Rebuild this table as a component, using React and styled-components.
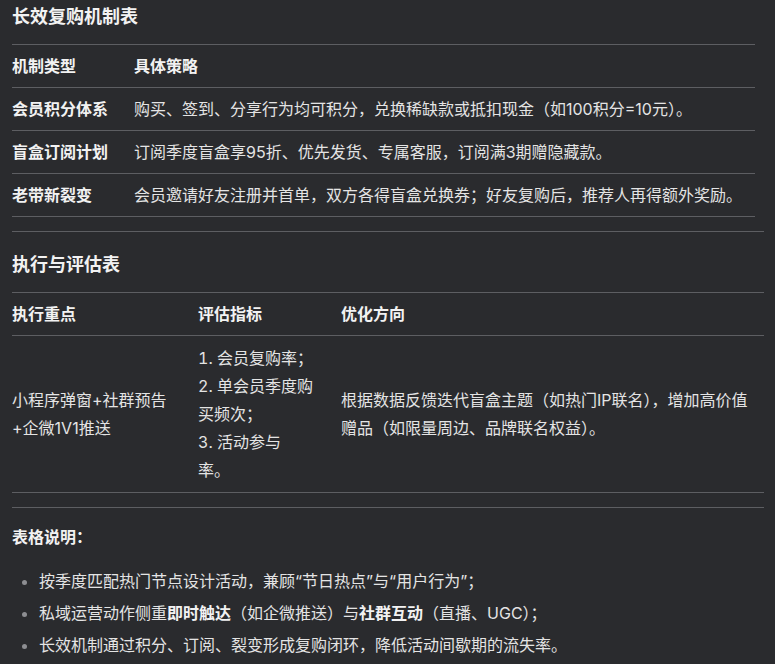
import React from "react";
import styled, { createGlobalStyle } from "styled-components";

const GlobalStyle = createGlobalStyle`
  body {
    margin: 0;
    background: #2a2b2e;
    color: #e4e4e4;
    font-family: "Inter", "Noto Sans CJK SC", sans-serif;
    font-size: 16px;
  }
`;

const Page = styled.div`
  padding: 3px 11px 20px 12px;
`;

const SectionTitle = styled.h3`
  margin: ${(p) => (p.$first ? "0" : "19px")} 0 13px;
  font-size: 18px;
  line-height: 28px;
  font-weight: 700;
  color: #f2f2f2;
`;

const Table = styled.table`
  border-collapse: collapse;
  width: ${(p) => (p.$full ? "100%" : "auto")};
  border-top: 1px solid #5d5e62;
`;

const Th = styled.th`
  box-sizing: border-box;
  width: ${(p) => p.$w || "auto"};
  padding: 8px 13px;
  text-align: left;
  font-weight: 700;
  line-height: 26px;
  color: #f2f2f2;
  border-bottom: 1px solid #5d5e62;
  white-space: nowrap;

  &:first-child {
    padding-left: 0;
  }
`;

const Td = styled.td`
  padding: 8px 13px;
  line-height: ${(p) => (p.$tall ? "28px" : "26px")};
  vertical-align: middle;
  border-bottom: 1px solid #5d5e62;
  font-weight: ${(p) => (p.$bold ? 700 : 400)};
  color: ${(p) => (p.$bold ? "#f2f2f2" : "#e4e4e4")};
  white-space: ${(p) => (p.$nowrap ? "nowrap" : "normal")};

  &:first-child {
    padding-left: 0;
  }
`;

const MetricList = styled.ol`
  margin: 0;
  padding: 0;
  list-style-position: inside;
  line-height: 28px;
`;

const Divider = styled.hr`
  margin: 14px 0 0;
  border: 0;
  border-top: 1px solid #5d5e62;
`;

const NoteTitle = styled.p`
  margin: 15px 0 16px;
  line-height: 28px;
  font-weight: 700;
  color: #f2f2f2;
`;

const BulletList = styled.ul`
  margin: 0;
  padding-left: 27px;
`;

const Bullet = styled.li`
  line-height: 28px;
  margin-bottom: 4px;

  &::marker {
    color: #8d8e92;
  }

  strong {
    font-weight: 700;
    color: #f2f2f2;
  }
`;

const mechanisms = [
  ["会员积分体系", "购买、签到、分享行为均可积分，兑换稀缺款或抵扣现金（如100积分=10元）。"],
  ["盲盒订阅计划", "订阅季度盲盒享95折、优先发货、专属客服，订阅满3期赠隐藏款。"],
  ["老带新裂变", "会员邀请好友注册并首单，双方各得盲盒兑换券；好友复购后，推荐人再得额外奖励。"],
];

// the last metric breaks before 率 as in the design
const metrics = [["会员复购率；"], ["单会员季度购买频次；"], ["活动参与", "率。"]];

export default function App() {
  return (
    <Page>
      <GlobalStyle />
      <SectionTitle $first>长效复购机制表</SectionTitle>
      <Table>
        <thead>
          <tr>
            <Th>机制类型</Th>
            <Th>具体策略</Th>
          </tr>
        </thead>
        <tbody>
          {mechanisms.map(([type, plan]) => (
            <tr key={type}>
              <Td $bold $nowrap>{type}</Td>
              <Td $nowrap>{plan}</Td>
            </tr>
          ))}
        </tbody>
      </Table>
      <Divider />

      <SectionTitle>执行与评估表</SectionTitle>
      <Table $full>
        <thead>
          <tr>
            <Th $w="173px">执行重点</Th>
            <Th $w="143px">评估指标</Th>
            <Th>优化方向</Th>
          </tr>
        </thead>
        <tbody>
          <tr>
            <Td $tall>小程序弹窗+社群预告+企微1V1推送</Td>
            <Td $tall>
              <MetricList>
                {metrics.map(([head, tail]) => (
                  <li key={head}>
                    {head}
                    {tail && (
                      <>
                        <br />
                        {tail}
                      </>
                    )}
                  </li>
                ))}
              </MetricList>
            </Td>
            <Td $tall>
              根据数据反馈迭代盲盒主题（如热门IP联名），增加高价值赠品（如限量周边、品牌联名权益）。
            </Td>
          </tr>
        </tbody>
      </Table>
      <Divider />

      <NoteTitle>表格说明：</NoteTitle>
      <BulletList>
        <Bullet>按季度匹配热门节点设计活动，兼顾“节日热点”与“用户行为”；</Bullet>
        <Bullet>
          私域运营动作侧重<strong>即时触达</strong>（如企微推送）与<strong>社群互动</strong>（直播、UGC）；
        </Bullet>
        <Bullet>长效机制通过积分、订阅、裂变形成复购闭环，降低活动间歇期的流失率。</Bullet>
      </BulletList>
    </Page>
  );
}
